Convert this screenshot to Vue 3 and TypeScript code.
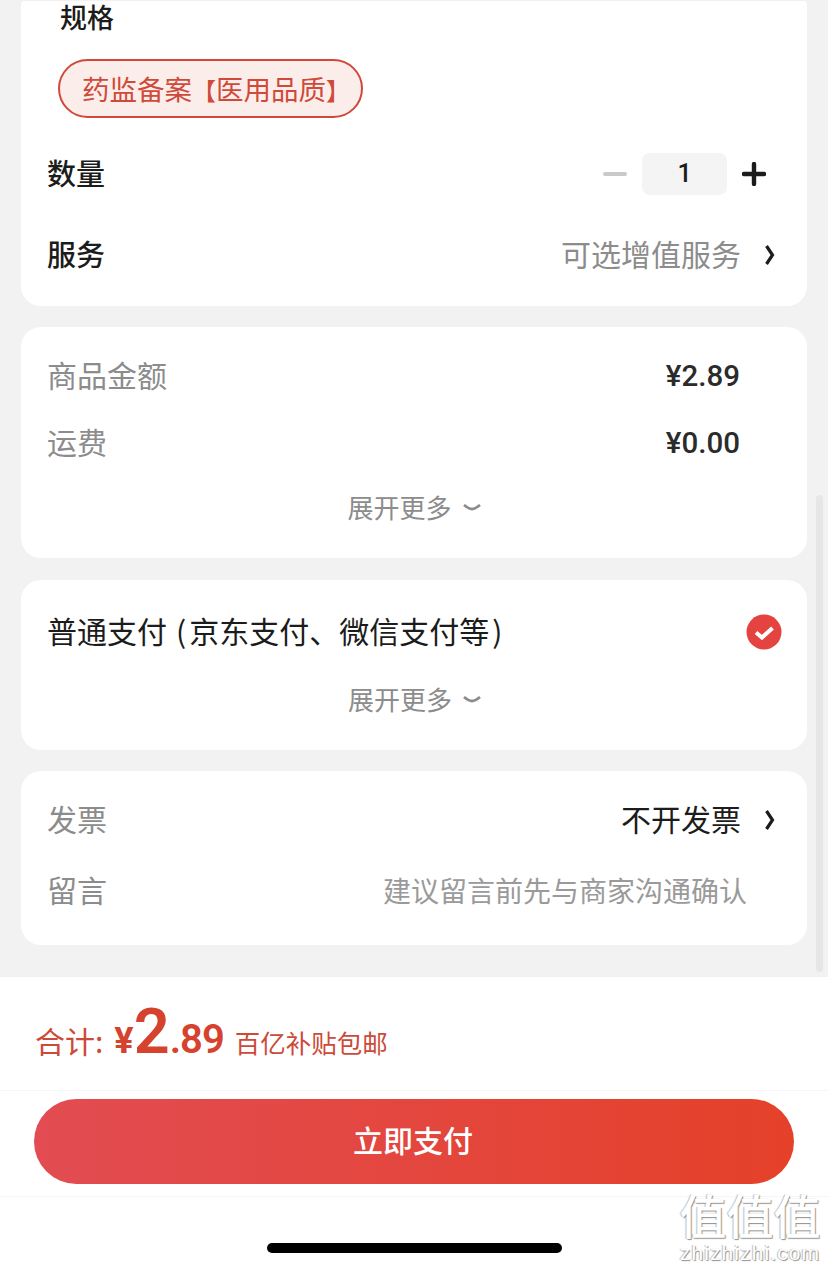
<script setup lang="ts">
const fees = [
  { label: "商品金额", value: "¥2.89" },
  { label: "运费", value: "¥0.00" },
];
</script>

<template>
  <div class="page">
    <main class="content">
      <section class="card card-spec">
        <div class="spec-title">规格</div>
        <div class="chip">药监备案<span class="bracket">【</span>医用品质<span class="bracket bracket-end">】</span></div>
        <div class="row row-qty">
          <span class="strong">数量</span>
          <div class="stepper">
            <svg width="24" height="24" viewBox="0 0 24 24">
              <path d="M2 12h20" stroke="#c9c9c9" stroke-width="4" stroke-linecap="round" />
            </svg>
            <span class="qty">1</span>
            <svg width="24" height="24" viewBox="0 0 24 24">
              <path d="M2 12h20M12 2v20" stroke="#1c1c1c" stroke-width="4.400" stroke-linecap="round" />
            </svg>
          </div>
        </div>
        <div class="row row-service">
          <span class="strong">服务</span>
          <span class="link">
            <span class="muted">可选增值服务</span>
            <svg width="12" height="22" viewBox="0 0 12 22">
              <path d="M2.500 2 8.500 11 2.500 20" fill="none" stroke="#1c1c1c" stroke-width="3.200" />
            </svg>
          </span>
        </div>
      </section>

      <section class="card card-fee">
        <div v-for="fee in fees" :key="fee.label" class="fee-row">
          <span class="muted">{{ fee.label }}</span>
          <span class="fee-value">{{ fee.value }}</span>
        </div>
        <div class="more">展开更多
          <svg width="18" height="9" viewBox="0 0 18 9">
            <path d="M1 2c3 2.500 5 4 8 4s5-1.500 8-4" fill="none" stroke="#8c8c8c" stroke-width="2.800" />
          </svg>
        </div>
      </section>

      <section class="card card-pay">
        <div class="pay-row">
          <span class="pay-name">普通支付<span class="paren-open">(</span>京东支付、微信支付等<span class="paren-close">)</span></span>
          <svg width="36" height="36" viewBox="0 0 36 36">
            <circle cx="18" cy="18" r="17.500" fill="#e5433f" />
            <path d="M10 18.500l6 5 10.500-9.500" fill="none" stroke="#fff" stroke-width="4" />
          </svg>
        </div>
        <div class="more">展开更多
          <svg width="18" height="9" viewBox="0 0 18 9">
            <path d="M1 2c3 2.500 5 4 8 4s5-1.500 8-4" fill="none" stroke="#8c8c8c" stroke-width="2.800" />
          </svg>
        </div>
      </section>

      <section class="card card-note">
        <div class="row row-invoice">
          <span class="muted">发票</span>
          <span class="link">
            <span class="dark">不开发票</span>
            <svg width="12" height="22" viewBox="0 0 12 22">
              <path d="M2.500 2 8.500 11 2.500 20" fill="none" stroke="#1c1c1c" stroke-width="3.200" />
            </svg>
          </span>
        </div>
        <div class="row row-remark">
          <span class="muted">留言</span>
          <span class="remark">建议留言前先与商家沟通确认</span>
        </div>
      </section>
    </main>

    <footer class="footer">
      <div class="total">
        <span class="total-label">合计:</span>
        <span class="price"><span class="yen">¥</span><span class="big">2</span><span class="cents">.89</span></span>
        <span class="promo">百亿补贴包邮</span>
      </div>
      <div class="action">
        <button class="pay-btn">立即支付</button>
      </div>
      <div class="home-area">
        <div class="home-bar"></div>
      </div>
    </footer>

    <div class="scrollbar"></div>
    <div class="watermark">
      <div class="wm-mark">值值值</div>
      <div class="wm-url">zhizhizhi.com</div>
    </div>
  </div>
</template>

<style>
html,
body {
  margin: 0;
  background: #f2f2f2;
}
</style>

<style scoped>
.page {
  position: relative;
  width: 828px;
  height: 1270px;
  overflow: hidden;
  background: #f2f2f2;
  font-family: "Noto Sans CJK SC", "Liberation Sans", sans-serif;
  color: #1c1c1c;
}

.content {
  display: flex;
  flex-direction: column;
  gap: 21px;
  height: 977px;
  box-sizing: border-box;
  padding: 0 21px;
}

.card {
  background: #fff;
  border-radius: 20px;
  box-sizing: border-box;
}

.card-spec {
  height: 305px;
  margin-top: 1px;
  border-radius: 4px 4px 20px 20px;
  padding: 0 26px;
}

.spec-title {
  margin-left: 13px;
  font-size: 27px;
  font-weight: 500;
  line-height: 32px;
}

.chip {
  display: inline-block;
  margin: 26px 0 0 11px;
  padding: 0 22px;
  height: 59px;
  box-sizing: border-box;
  line-height: 55px;
  border: 2px solid #d1483a;
  border-radius: 30px;
  background: #fbeeea;
  color: #cf4a3a;
  font-size: 27.500px;
  white-space: nowrap;
}

.bracket {
  font-size: 24px;
}

.bracket-end {
  margin-right: -11px;
}

.row {
  display: flex;
  align-items: center;
  justify-content: space-between;
}

.strong {
  margin-bottom: 4px;
  font-size: 29px;
  font-weight: 500;
}

.muted {
  margin-bottom: 4px;
  color: #8c8c8c;
  font-size: 30px;
}

.row-qty {
  height: 42px;
  margin-top: 35px;
}

.stepper {
  display: flex;
  align-items: center;
  margin-right: 15px;
}

.qty {
  width: 85px;
  height: 42px;
  margin: 0 15px;
  border-radius: 8px;
  background: #f4f4f4;
  text-align: center;
  font-family: Roboto, "Liberation Sans", sans-serif;
  font-size: 25px;
  font-weight: 500;
  line-height: 42px;
}

.row-service {
  height: 40px;
  margin-top: 40px;
}

.link {
  display: flex;
  align-items: center;
  gap: 23px;
  margin-right: 5px;
}

.dark {
  margin-bottom: 4px;
  color: #1c1c1c;
  font-size: 30px;
}

.card-fee {
  height: 231px;
  padding: 29px 26px 0;
}

.fee-row {
  display: flex;
  align-items: center;
  justify-content: space-between;
  height: 40px;
  margin-bottom: 27px;
  padding-right: 41px;
}

.fee-value {
  font-family: Roboto, "Liberation Sans", sans-serif;
  font-size: 29.500px;
  font-weight: 500;
  color: #2b2b2b;
}

.more {
  display: flex;
  align-items: center;
  justify-content: center;
  gap: 11px;
  color: #8c8c8c;
  font-size: 26px;
  line-height: 36px;
}

.card-fee .more {
  margin-top: -1px;
}

.card-pay {
  height: 170px;
  margin-top: 1px;
  padding: 32px 25px 0 26px;
}

.pay-row {
  display: flex;
  align-items: center;
  justify-content: space-between;
  height: 40px;
  margin-bottom: 29px;
}

.pay-name {
  margin-bottom: 4px;
  font-size: 30px;
  white-space: nowrap;
}

.paren-open {
  margin: 0 3px 0 9px;
}

.paren-close {
  margin-left: 3px;
}

.card-note {
  height: 174px;
  padding: 29px 26px 0;
}

.row-invoice {
  height: 40px;
}

.row-remark {
  height: 40px;
  margin-top: 31px;
}

.remark {
  margin-right: 34px;
  margin-bottom: 2px;
  color: #9a9a9a;
  font-size: 28px;
}

.footer {
  background: #fff;
  height: 293px;
}

.total {
  display: flex;
  align-items: baseline;
  height: 114px;
  box-sizing: border-box;
  padding: 25px 0 0 35px;
  border-bottom: 1px solid #f6f6f6;
  color: #cc4a3a;
  white-space: nowrap;
}

.total-label {
  font-size: 30px;
}

.price {
  margin-left: 11px;
  font-family: Roboto, "Liberation Sans", sans-serif;
  font-weight: 600;
  color: #d5432e;
}

.yen {
  font-size: 36px;
  font-weight: 700;
}

.big {
  font-size: 63px;
  line-height: 60px;
}

.cents {
  font-size: 40px;
  letter-spacing: -1px;
}

.promo {
  margin-left: 11px;
  font-size: 25.500px;
}

.action {
  height: 106px;
  box-sizing: border-box;
  padding: 8px 34px 0;
  border-bottom: 1px solid #f6f6f6;
}

.pay-btn {
  display: block;
  width: 760px;
  height: 85px;
  padding: 0 2px 6px 0;
  border: 0;
  border-radius: 43px;
  background: linear-gradient(90deg, #e24c52, #e5412a);
  color: #fff;
  font-family: inherit;
  font-size: 30px;
  font-weight: 500;
}

.home-area {
  display: flex;
  justify-content: center;
  padding-top: 46px;
}

.home-bar {
  width: 295px;
  height: 10px;
  border-radius: 5px;
  background: #000;
}

.scrollbar {
  position: absolute;
  top: 495px;
  left: 816px;
  width: 7px;
  height: 477px;
  border-radius: 4px;
  background: #e6e6e6;
}

.watermark {
  position: absolute;
  top: 1186px;
  left: 678px;
  width: 144px;
  text-align: center;
  color: #fff;
  text-shadow: 1px 1px 1px #8f8f8f, -1px 0 1px #bdbdbd;
}

.wm-mark {
  font-size: 47px;
  font-weight: 500;
  line-height: 56px;
  white-space: nowrap;
}

.wm-url {
  font-family: "Liberation Sans", sans-serif;
  font-size: 21px;
  line-height: 22px;
  letter-spacing: 1.100px;
}
</style>
